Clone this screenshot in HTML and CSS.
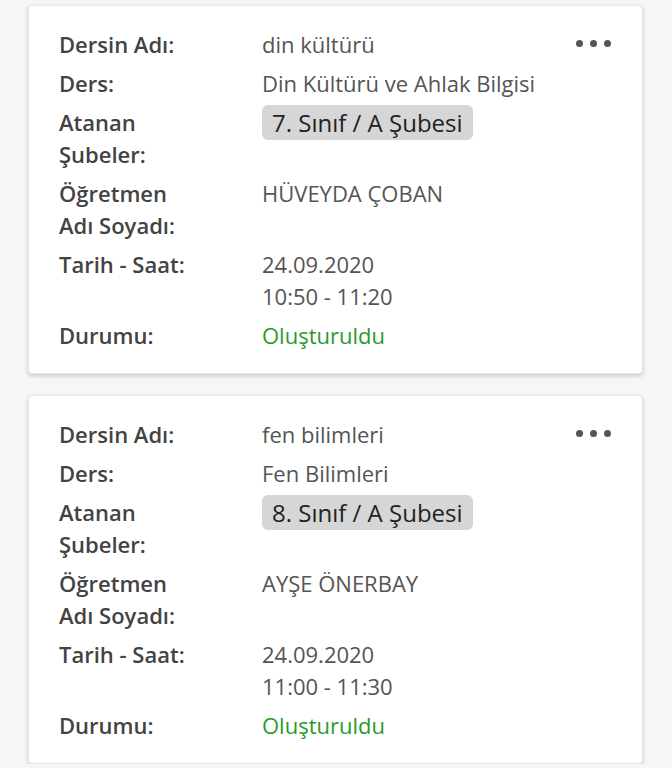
FILE: index.html
```html
<!DOCTYPE html>
<html lang="tr">
<head>
  <meta charset="UTF-8" />
  <meta name="viewport" content="width=device-width, initial-scale=1">
  <title>Dersler</title>
  <link rel="stylesheet" href="styles.css">
</head>
<body>

  <!-- 1. ders -->
  <div class="lesson-card">
    <div class="more"><span></span><span></span><span></span></div>
    <div class="row">
      <div class="label">Dersin Adı:</div>
      <div class="value">din kültürü</div>
    </div>
    <div class="row">
      <div class="label">Ders:</div>
      <div class="value">Din Kültürü ve Ahlak Bilgisi</div>
    </div>
    <div class="row">
      <div class="label">Atanan Şubeler:</div>
      <div class="value"><span class="badge">7. Sınıf / A Şubesi</span></div>
    </div>
    <div class="row">
      <div class="label">Öğretmen Adı Soyadı:</div>
      <div class="value">HÜVEYDA ÇOBAN</div>
    </div>
    <div class="row">
      <div class="label">Tarih - Saat:</div>
      <div class="value">24.09.2020<br>10:50 - 11:20</div>
    </div>
    <div class="row">
      <div class="label">Durumu:</div>
      <div class="value status">Oluşturuldu</div>
    </div>
  </div>

  <!-- 2. ders -->
  <div class="lesson-card">
    <div class="more"><span></span><span></span><span></span></div>
    <div class="row">
      <div class="label">Dersin Adı:</div>
      <div class="value">fen bilimleri</div>
    </div>
    <div class="row">
      <div class="label">Ders:</div>
      <div class="value">Fen Bilimleri</div>
    </div>
    <div class="row">
      <div class="label">Atanan Şubeler:</div>
      <div class="value"><span class="badge">8. Sınıf / A Şubesi</span></div>
    </div>
    <div class="row">
      <div class="label">Öğretmen Adı Soyadı:</div>
      <div class="value">AYŞE ÖNERBAY</div>
    </div>
    <div class="row">
      <div class="label">Tarih - Saat:</div>
      <div class="value">24.09.2020<br>11:00 - 11:30</div>
    </div>
    <div class="row">
      <div class="label">Durumu:</div>
      <div class="value status">Oluşturuldu</div>
    </div>
  </div>

</body>
</html>
```

FILE: styles.css
```css
:root {
  --bg: #f6f6f6;
  --label: #434343;
  --value: #555;
  --green: #2b9a2b;
}
* { box-sizing: border-box; }
body {
  margin: 0;
  background: var(--bg);
  font-family: 'Open Sans', sans-serif;
  font-size: 22px;
  line-height: 32px;
  padding: 5px 29px 0 28px;
  display: flex;
  flex-direction: column;
  gap: 21px;
}
.lesson-card {
  position: relative;
  background: white;
  border: 1px solid #e6e6e6;
  border-radius: 4px;
  box-shadow: 0 2px 4px rgba(0,0,0,0.18);
  padding: 22px 30px 22px 30px;
  display: flex;
  flex-direction: column;
  gap: 7px;
}
.row {
  display: grid;
  grid-template-columns: 140px 1fr;
  column-gap: 63px;
}
.label {
  font-weight: 600;
  color: var(--label);
}
.value {
  color: var(--value);
}
.status {
  color: var(--green);
}
.badge {
  display: inline-block;
  background: #d6d6d6;
  color: #222;
  font-size: 24px;
  line-height: 35px;
  padding: 0 10px;
  border-radius: 6px;
  margin-top: -1px;
}
.more {
  position: absolute;
  top: 34px;
  right: 31px;
  display: flex;
  gap: 7px;
}
.more span {
  width: 7px;
  height: 7px;
  border-radius: 50%;
  background: #555;
}
```
